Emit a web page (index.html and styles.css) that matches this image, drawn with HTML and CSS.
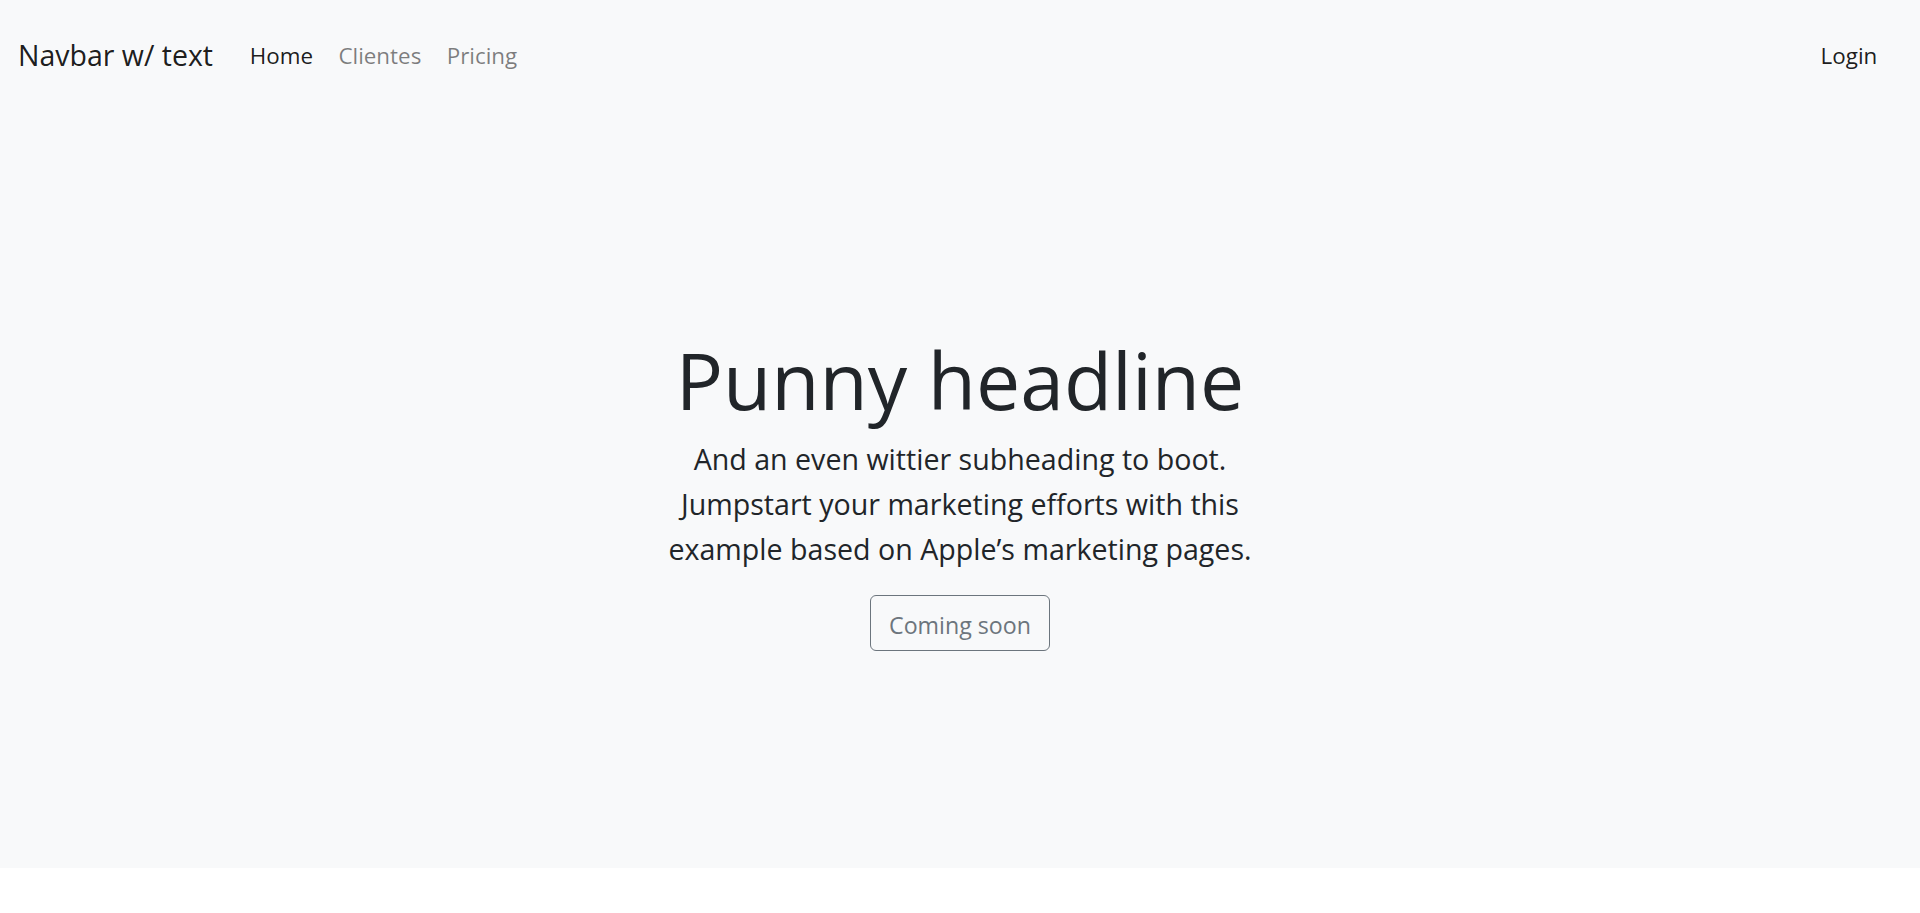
FILE: index.html
```html
<!DOCTYPE html>
<html lang="en">
<head>
<meta charset="utf-8">
<title>Punny headline</title>
<link rel="stylesheet" href="styles.css">
</head>
<body>
<div class="top">
  <nav class="navbar">
    <a class="brand" href="#">Navbar w/ text</a>
    <ul class="nav-links">
      <li><a class="nav-link active" href="#">Home</a></li>
      <li><a class="nav-link" href="#">Clientes</a></li>
      <li><a class="nav-link" href="#">Pricing</a></li>
    </ul>
    <a class="nav-link login" href="#">Login</a>
  </nav>
  <section class="hero">
    <div class="hero-inner">
      <h1 class="headline">Punny headline</h1>
      <p class="lead">And an even wittier subheading to boot. Jumpstart your marketing efforts with this example based on Apple’s marketing pages.</p>
      <a class="btn-outline" href="#">Coming soon</a>
    </div>
  </section>
</div>
</body>
</html>
```
FILE: styles.css
```css
* { box-sizing: border-box; }

html, body {
  margin: 0;
  padding: 0;
  background: #ffffff;
}

body {
  font-family: "Open Sans", "Noto Sans", sans-serif;
  color: #212529;
}

a { text-decoration: none; }

.top {
  background: #f8f9fa;
}

.navbar {
  display: flex;
  align-items: center;
  padding: 35px 30px 0 18px;
}

.brand {
  font-size: 28.5px;
  line-height: 41px;
  color: rgba(0, 0, 0, 0.9);
  margin-right: 24px;
}

.nav-links {
  display: flex;
  list-style: none;
  margin: 0;
  padding: 0;
  flex: 1;
}

.nav-link {
  display: block;
  font-size: 22.4px;
  line-height: 33px;
  padding: 0 12.7px;
  color: rgba(0, 0, 0, 0.5);
}

.nav-link.active,
.nav-link.login {
  color: rgba(0, 0, 0, 0.9);
}

.hero {
  padding: 258px 0 217px;
  text-align: center;
}

.hero-inner {
  max-width: 640px;
  margin: 0 auto;
}

.headline {
  font-size: 78.7px;
  font-weight: 400;
  line-height: 92px;
  margin: 0 0 10px;
  color: #212529;
}

.lead {
  font-size: 28.6px;
  line-height: 45px;
  margin: 0 0 24px;
  color: #212529;
}

.btn-outline {
  display: inline-block;
  font-size: 23.2px;
  line-height: 36px;
  padding: 11px 18px 7px;
  border: 1px solid #6c757d;
  border-radius: 6px;
  color: #6c757d;
}
```
